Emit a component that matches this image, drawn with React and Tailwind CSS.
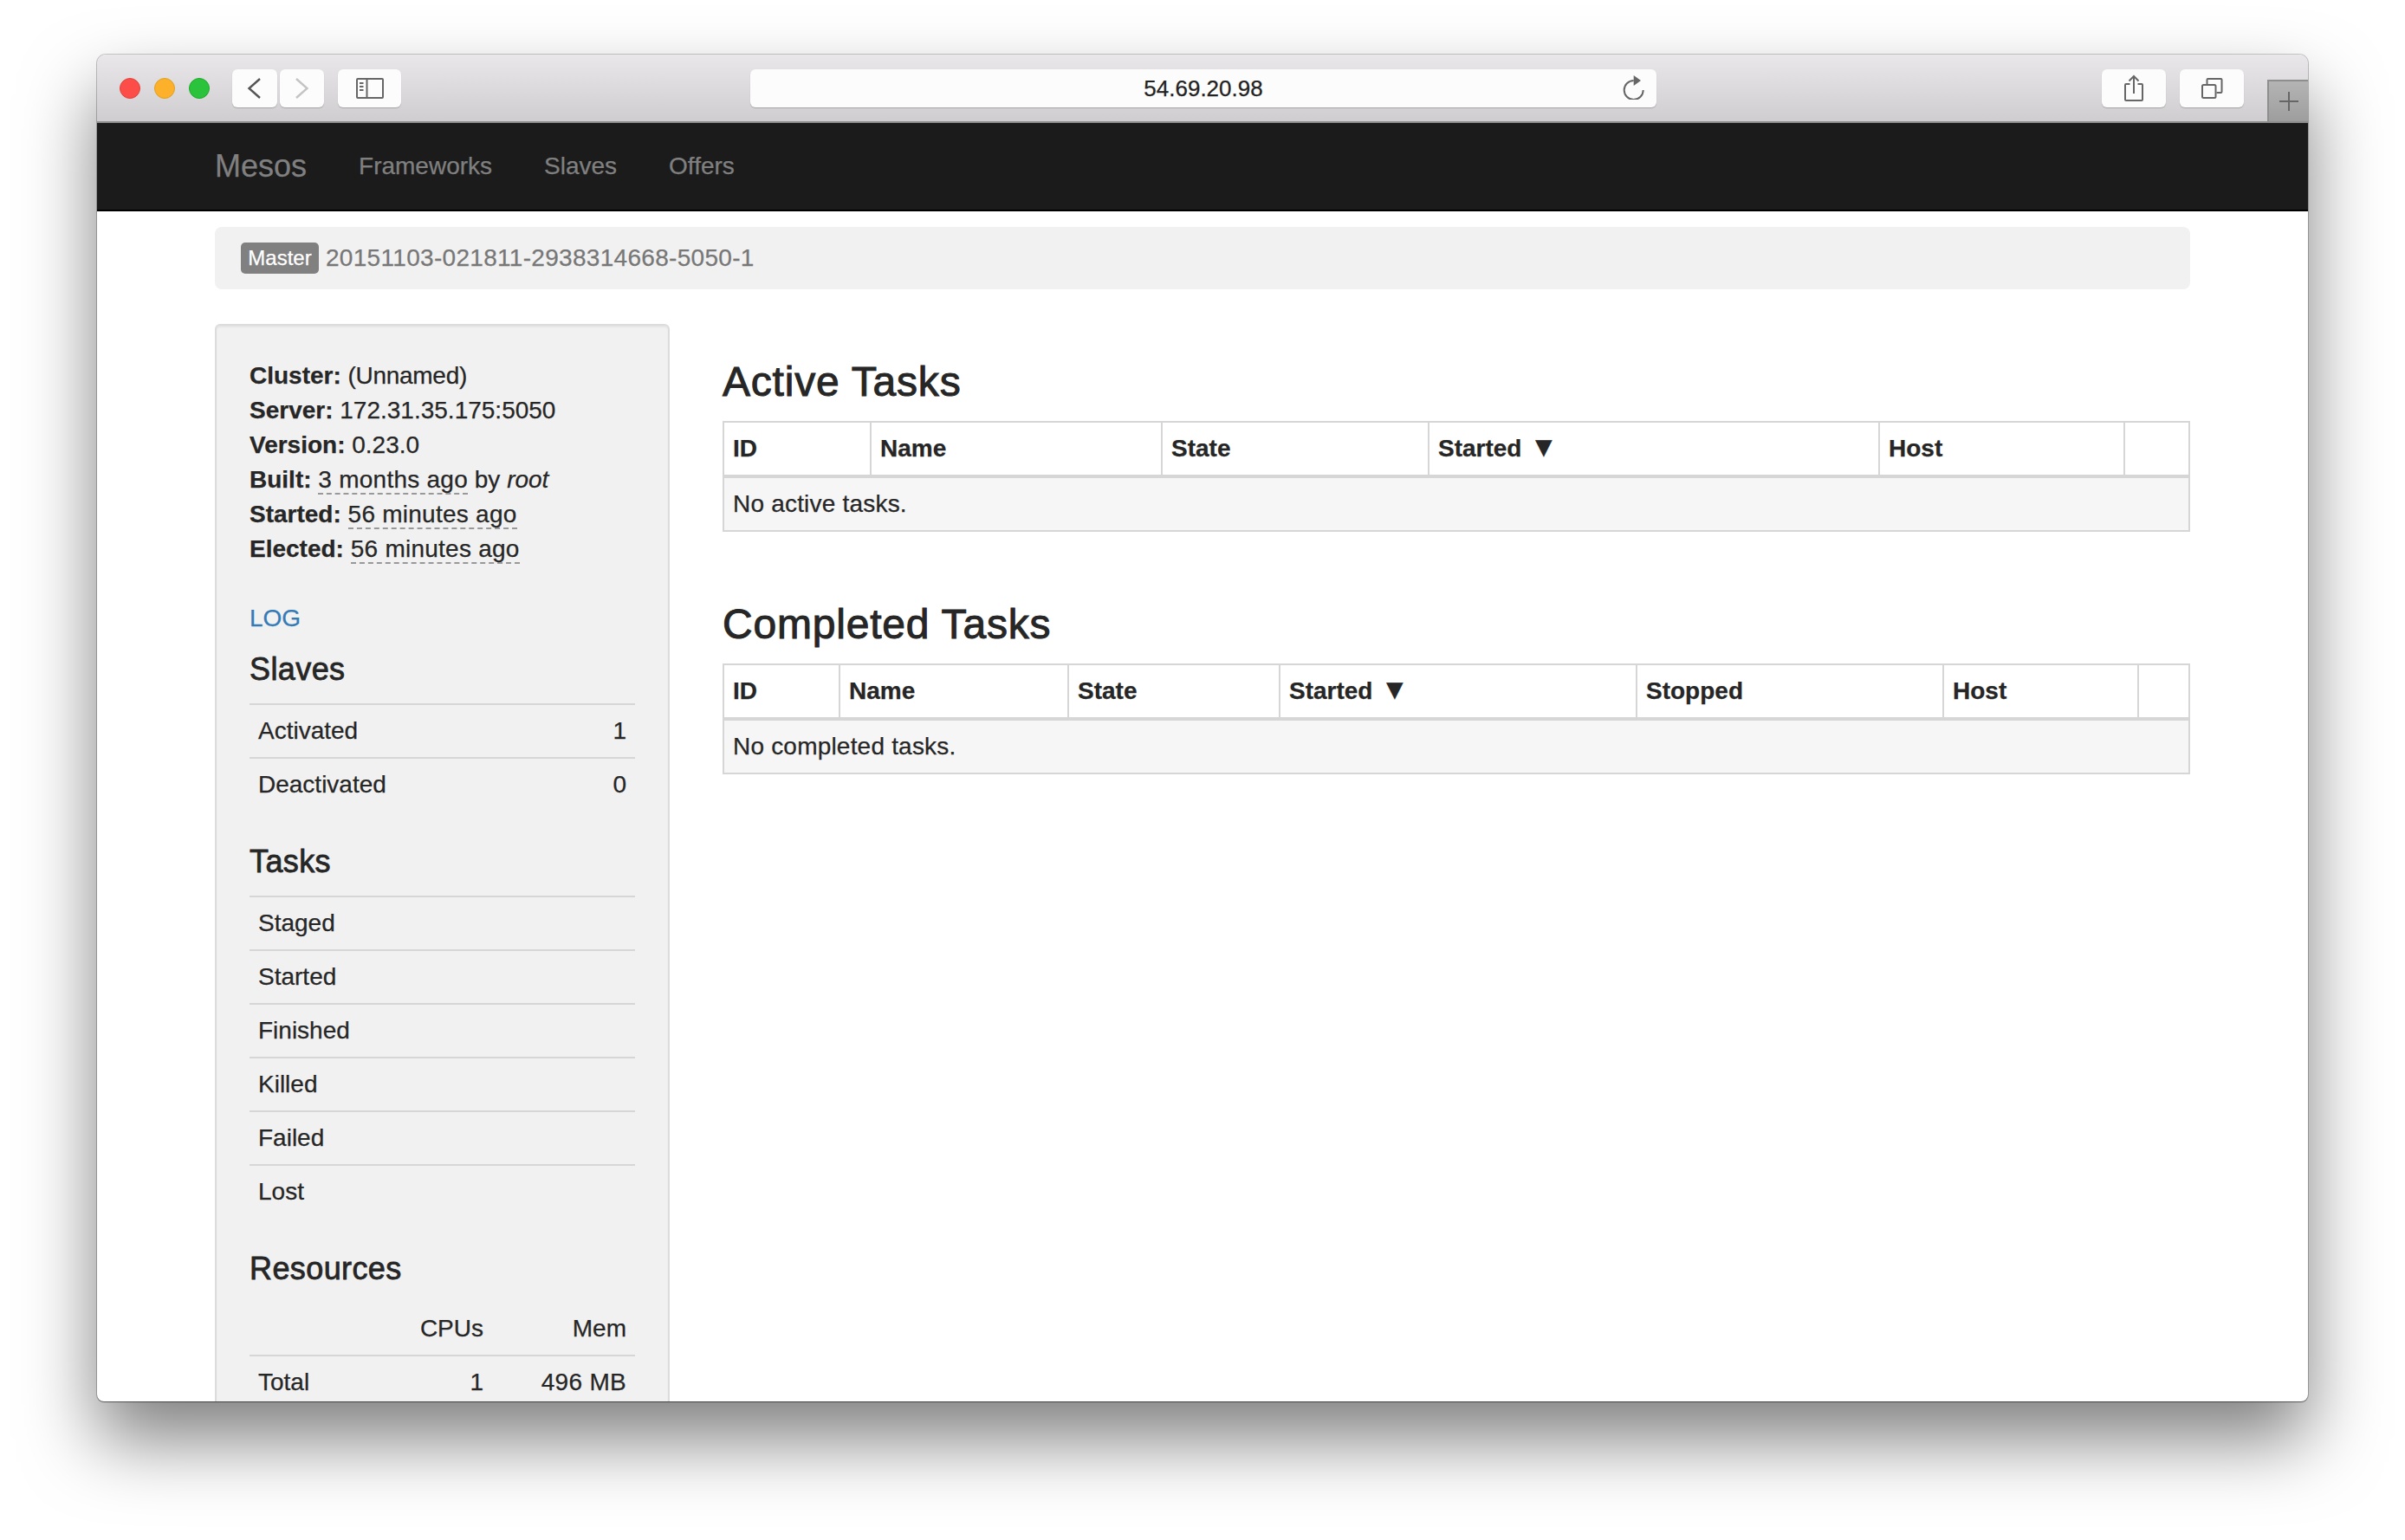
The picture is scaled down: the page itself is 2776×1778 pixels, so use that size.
import React from 'react';

const ToolBtn = ({ className, children }) => (
  <div className={`h-[44px] bg-[#fcfcfc] rounded-[6px] shadow-[0_1px_1px_rgba(0,0,0,0.22)] flex items-center justify-center ${className}`}>
    {children}
  </div>
);

const Lights = () => (
  <div className="flex gap-[16px] ml-[26px] mr-[26px] mt-[10px]">
    <div className="w-[24px] h-[24px] rounded-full bg-[#fc4d49] border border-[#e0443e]" />
    <div className="w-[24px] h-[24px] rounded-full bg-[#fdb12a] border border-[#dea123]" />
    <div className="w-[24px] h-[24px] rounded-full bg-[#2cc33c] border border-[#1aab29]" />
  </div>
);

const Toolbar = () => (
  <div className="relative h-[79px] shrink-0 flex items-start pt-[17px] bg-gradient-to-b from-[#e9e7e9] to-[#cfcdcf] border-b-2 border-[#8e8e8e] rounded-t-[10px]">
    <Lights />
    <div className="flex gap-[3px]">
      <ToolBtn className="w-[52px] pr-[2px]">
        <svg width="17" height="26" viewBox="0 0 17 26" fill="none" stroke="#555" strokeWidth="2.4"><path d="M15 2 L2.5 13 L15 24" /></svg>
      </ToolBtn>
      <ToolBtn className="w-[51px]">
        <svg width="17" height="26" viewBox="0 0 17 26" fill="none" stroke="#c4c4c4" strokeWidth="2.4"><path d="M2 2 L14.5 13 L2 24" /></svg>
      </ToolBtn>
    </div>
    <ToolBtn className="w-[73px] ml-[16px]">
      <svg width="32" height="24" viewBox="0 0 32 24" fill="none" stroke="#666" strokeWidth="2">
        <rect x="1" y="1" width="30" height="22" rx="1" />
        <path d="M12.5 1 V23" />
        <path d="M4 6 H8.5 M4 10 H8.5 M4 14 H8.5" />
      </svg>
    </ToolBtn>
    <ToolBtn className="w-[1046px] ml-[403px] relative">
      <span className="text-[26px] text-[#222] leading-none">54.69.20.98</span>
      <svg className="absolute right-[12px] top-[5px]" width="28" height="30" viewBox="0 0 28 30" fill="none" stroke="#666" strokeWidth="2">
        <path d="M13.7 8 A11 11 0 1 0 24.7 19" />
        <path d="M13.7 2 L22 8 L13.7 14 Z" fill="#666" stroke="none" />
      </svg>
    </ToolBtn>
    <ToolBtn className="w-[74px] ml-[514px]">
      <svg width="24" height="32" viewBox="0 0 24 32" fill="none" stroke="#666" strokeWidth="2">
        <path d="M7.5 11 H3 Q2 11 2 12 V29 Q2 30 3 30 H21 Q22 30 22 29 V12 Q22 11 21 11 H16.5" />
        <path d="M12 22 V2 M6.5 7.5 L12 2 L17.5 7.5" />
      </svg>
    </ToolBtn>
    <ToolBtn className="w-[74px] ml-[16px]">
      <svg width="28" height="26" viewBox="0 0 28 26" fill="none" stroke="#666" strokeWidth="2">
        <rect x="3" y="9" width="15.5" height="15" rx="1.5" />
        <path d="M8.5 8 V3 Q8.5 2 9.5 2 H24.5 Q25.5 2 25.5 3 V17 Q25.5 18 24.5 18 H19.5" />
      </svg>
    </ToolBtn>
    <div className="absolute right-0 bottom-0 w-[47px] h-[48px] bg-gradient-to-b from-[#b4b4b4] to-[#9e9e9e] border-t-2 border-l-2 border-[#8e8e8e] flex items-center justify-center">
      <svg width="24" height="24" viewBox="0 0 24 24" stroke="#666" strokeWidth="2"><path d="M12 1 V23 M1 12 H23" /></svg>
    </div>
  </div>
);

const Navbar = () => (
  <div className="h-[102px] shrink-0 bg-[#1b1b1b] border-b-2 border-black">
    <div className="w-[2280px] mx-auto h-full flex items-center">
      <span className="text-[36px] text-[#808080] mr-[60px]">Mesos</span>
      <div className="flex gap-[60px] text-[28px] text-[#808080]">
        <span>Frameworks</span>
        <span>Slaves</span>
        <span>Offers</span>
      </div>
    </div>
  </div>
);

const Ago = ({ children }) => <span className="border-b-2 border-dashed border-[#999] tracking-[0.25px]">{children}</span>;

const Info = ({ label, children }) => (
  <div><b>{label}</b> {children}</div>
);

const H4 = ({ children, className = '' }) => (
  <h4 className={`text-[36px] leading-[40px] mb-[19px] tracking-[0.4px] [-webkit-text-stroke:0.8px_#262626] ${className}`}>{children}</h4>
);

const Row = ({ children, right }) => (
  <tr>
    <td className="border-t-2 border-[#d6d6d6] px-[10px] py-[10px]">{children}</td>
    <td className="border-t-2 border-[#d6d6d6] px-[10px] py-[10px] text-right">{right}</td>
  </tr>
);

const StatTable = ({ rows }) => (
  <table className="w-full border-separate border-spacing-0 mb-[39px]">
    <tbody>
      {rows.map(([name, val]) => <Row key={name} right={val}>{name}</Row>)}
    </tbody>
  </table>
);

const Sidebar = () => (
  <div className="w-[525px] shrink-0 h-[1300px] bg-[#f1f1f1] border-2 border-[#dcdcdc] rounded-[6px] p-[38px] leading-[40px] shadow-[inset_0_2px_2px_rgba(0,0,0,0.05)]">
    <Info label="Cluster:"><span className="tracking-[-0.3px]">(Unnamed)</span></Info>
    <Info label="Server:">172.31.35.175:5050</Info>
    <Info label="Version:">0.23.0</Info>
    <Info label="Built:"><Ago>3 months ago</Ago> by <i>root</i></Info>
    <Info label="Started:"><Ago>56 minutes ago</Ago></Info>
    <Info label="Elected:"><Ago>56 minutes ago</Ago></Info>
    <div className="mt-[40px] text-[#337ab7]">LOG</div>
    <H4 className="mt-[19px]">Slaves</H4>
    <StatTable rows={[['Activated', '1'], ['Deactivated', '0']]} />
    <H4>Tasks</H4>
    <StatTable rows={['Staged', 'Started', 'Finished', 'Killed', 'Failed', 'Lost'].map((n) => [n, ''])} />
    <H4>Resources</H4>
    <table className="w-full table-fixed border-separate border-spacing-0">
      <colgroup>
        <col className="w-[170px]" />
        <col className="w-[110px]" />
        <col />
      </colgroup>
      <tbody>
        <tr>
          <td className="px-[10px] py-[10px]" />
          <td className="px-[10px] py-[10px] text-right">CPUs</td>
          <td className="px-[10px] py-[10px] text-right">Mem</td>
        </tr>
        <tr>
          <td className="border-t-2 border-[#d6d6d6] px-[10px] py-[10px]">Total</td>
          <td className="border-t-2 border-[#d6d6d6] px-[10px] py-[10px] text-right">1</td>
          <td className="border-t-2 border-[#d6d6d6] px-[10px] py-[10px] text-right tracking-[0.3px]">496 MB</td>
        </tr>
      </tbody>
    </table>
  </div>
);

const TaskTable = ({ title, cols, empty }) => (
  <>
    <h3 className="text-[48px] leading-[52px] mt-[41px] mb-[19px] tracking-[0.8px] [-webkit-text-stroke:1px_#262626]">{title}</h3>
    <table className="w-full table-fixed border-separate border-spacing-0 border-2 border-[#d6d6d6] mb-[81px]">
      <thead>
        <tr>
          {cols.map(([name, w], i) => (
            <th
              key={i}
              style={{ width: w }}
              className="text-left font-bold px-[10px] py-[10px] border-b-4 border-r-2 last:border-r-0 border-[#d6d6d6]"
            >
              {name}
              {name === 'Started' && <span className="text-[33px] leading-[0] ml-[9px]">▼</span>}
            </th>
          ))}
        </tr>
      </thead>
      <tbody>
        <tr>
          <td colSpan={cols.length} className="bg-[#f6f6f6] px-[10px] py-[10px] tracking-[0.2px]">{empty}</td>
        </tr>
      </tbody>
    </table>
  </>
);

export default function App() {
  return (
    <div className="w-[2776px] h-[1778px] bg-white pt-[63px] pl-[112px] font-['Liberation_Sans',Arial,sans-serif] text-[28px] leading-[40px] text-[#262626] [-webkit-text-stroke:0.25px] overflow-hidden">
      <div className="w-[2552px] h-[1555px] bg-white rounded-t-[10px] rounded-b-[8px] overflow-hidden flex flex-col shadow-[0_0_0_1px_rgba(0,0,0,0.2),0_1px_1px_rgba(0,0,0,0.4),0_44px_84px_rgba(0,0,0,0.5)]">
        <Toolbar />
        <Navbar />
        <div className="w-[2280px] mx-auto">
          <div className="mt-[18px] mb-[40px] h-[72px] bg-[#f1f1f1] rounded-[8px] px-[30px] flex items-center text-[#777]">
            <span className="bg-[#808080] text-white text-[24px] leading-none rounded-[5px] w-[90px] h-[36px] flex items-center justify-center mr-[8px]">Master</span>
            <span className="tracking-[0.3px]">20151103-021811-2938314668-5050-1</span>
          </div>
          <div className="flex gap-[61px]">
            <Sidebar />
            <div className="flex-1">
              <TaskTable
                title="Active Tasks"
                empty="No active tasks."
                cols={[['ID', 170], ['Name', 336], ['State', 308], ['Started', 520], ['Host', 283], ['']]}
              />
              <TaskTable
                title="Completed Tasks"
                empty="No completed tasks."
                cols={[['ID', 134], ['Name', 264], ['State', 244], ['Started', 412], ['Stopped', 354], ['Host', 225], ['']]}
              />
            </div>
          </div>
        </div>
      </div>
    </div>
  );
}
